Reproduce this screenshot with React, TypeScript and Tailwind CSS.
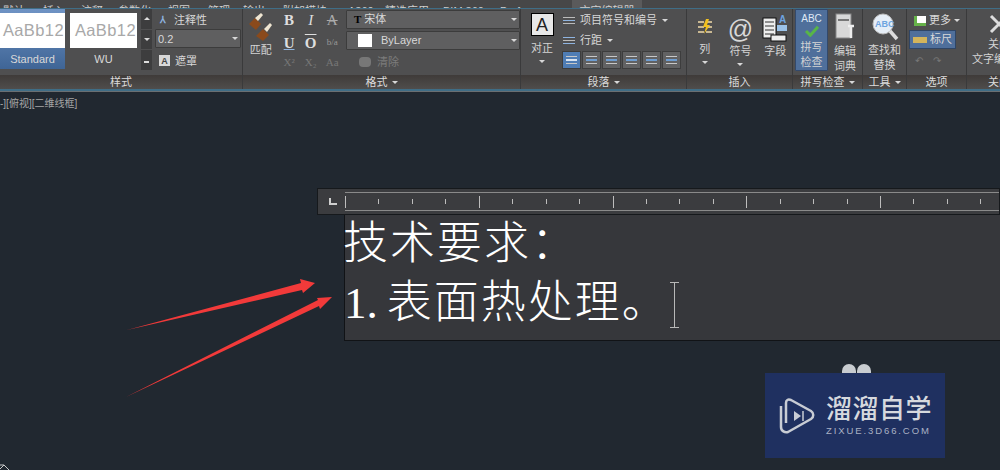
import type { ReactNode } from 'react';

const CJK = "font-['Liberation_Sans','Noto_Sans_CJK_SC',sans-serif]";

const tabs = [
  { label: '默认', w: 'w-[40px]' },
  { label: '插入', w: 'w-[38px]' },
  { label: '注释', w: 'w-[37px]' },
  { label: '参数化', w: 'w-[50px]' },
  { label: '视图', w: 'w-[40px]' },
  { label: '管理', w: 'w-[35px]' },
  { label: '输出', w: 'w-[40px]' },
  { label: '附加模块', w: 'w-[65px]' },
  { label: 'A360', w: 'w-[37px]' },
  { label: '精选应用', w: 'w-[58px]' },
  { label: 'BIM 360', w: 'w-[57px]' },
  { label: 'Performance', w: 'w-[73px]' },
];

function Caret() {
  return <span className="inline-block h-0 w-0 border-x-[3px] border-t-[3px] border-x-transparent border-t-[#d8d8d8]" />;
}

function Panel({ title, width, children, corner }: { title: string; width: string; children: ReactNode; corner?: boolean }) {
  return (
    <div className={`${width} flex shrink-0 flex-col border-r border-[#3a3a3b]`}>
      <div className="flex h-[66px] overflow-hidden">{children}</div>
      <div className="flex h-[14px] items-center justify-center gap-1 bg-gradient-to-b from-[#3f3b39] to-[#4f4d4c] pt-[1px] text-[11px] leading-none text-[#dcdcdc]">
        {title}
        {corner && <Caret />}
      </div>
    </div>
  );
}

function StyleSwatch({ name, active, w }: { name: string; active?: boolean; w: string }) {
  return (
    <div className={`flex h-[60px] ${w} shrink-0 flex-col items-center ${active ? 'bg-gradient-to-b from-[#6f93c4] to-[#3f6596]' : ''}`}>
      <div className="mt-[4px] flex h-[35px] w-full items-center justify-end overflow-hidden bg-white pr-[1px] font-['Liberation_Sans'] text-[16.5px] font-light tracking-[0.4px] whitespace-nowrap text-[#a8a8a8]">
        AaBb12
      </div>
      <div className="mt-[4px] text-[11px] leading-[14px] text-[#d8d8d8]">{name}</div>
    </div>
  );
}

function Field({ children, w }: { children: ReactNode; w: string }) {
  return (
    <div className={`${w} flex h-[19px] items-center justify-between rounded-[1px] border border-[#3c3c3c] bg-[#5f5f60] pr-[2px] pl-[2px] text-[11px] text-[#d8d8d8]`}>
      <div className="flex items-center">{children}</div>
      <Caret />
    </div>
  );
}

function BigLabel({ lines, caret }: { lines: string[]; caret?: boolean }) {
  return (
    <div className="flex flex-col items-center text-[11px] leading-[15px] text-[#d4d4d4]">
      {lines.map((l) => (
        <span key={l} className="whitespace-nowrap">{l}</span>
      ))}
      {caret && <span className="mt-[4px] flex"><Caret /></span>}
    </div>
  );
}

function Para({ active }: { active?: boolean }) {
  return (
    <div className={`flex h-[18px] w-[19px] shrink-0 flex-col justify-center gap-[2px] border border-[#3d3d3d] px-[3px] ${active ? 'bg-[#4f7db5]' : 'bg-[#626263]'}`}>
      <span className="h-px w-full bg-[#c8c8c8]" />
      <span className={`h-[2px] w-full ${active ? 'bg-[#d8e4f2]' : 'bg-[#6d9cd0]'}`} />
      <span className="h-px w-full bg-[#c8c8c8]" />
    </div>
  );
}

export default function App() {
  return (
    <div className={`relative flex h-[470px] w-[1000px] flex-col overflow-hidden bg-[#212830] ${CJK}`}>
      {/* tab strip, only the lower edge of the labels is on screen */}
      <div className="flex h-[9px] shrink-0 items-end overflow-hidden border-b border-[#3f6d86] bg-[#474748] text-[11px] leading-[14px] text-[#cfcfcf]">
        {tabs.map((t) => (
          <span key={t.label} className={`${t.w} -mb-[10px] shrink-0 pl-[3px] whitespace-nowrap`}>{t.label}</span>
        ))}
        <span className="ml-[2px] flex h-full w-[70px] items-end justify-center bg-[#5a5a5b]">
          <span className="-mb-[10px] whitespace-nowrap">文字编辑器</span>
        </span>
      </div>

      {/* ribbon */}
      <div className="flex h-[80px] shrink-0 bg-[#4f4f50]">
        <Panel title="样式" width="w-[243px]">
          <div className="flex h-[62px] items-start">
            <StyleSwatch name="Standard" active w="w-[65px]" />
            <div className="ml-[5px]"><StyleSwatch name="WU" w="w-[67px]" /></div>
            <div className="ml-[4px] flex h-[61px] w-[11px] shrink-0 flex-col gap-px">
              <div className="flex flex-1 items-center justify-center bg-[#3d3d3e]"><span className="h-0 w-0 border-x-[3px] border-b-[3px] border-x-transparent border-b-[#ddd]" /></div>
              <div className="flex flex-1 items-center justify-center bg-[#3d3d3e]"><Caret /></div>
              <div className="flex flex-1 items-center justify-center bg-[#3d3d3e]"><span className="h-[5px] w-[5px] border-b-2 border-[#ddd]" /></div>
            </div>
          </div>
          <div className="ml-[3px] flex flex-col pt-[1px] text-[11px] leading-[14px] text-[#d8d8d8]">
            <div className="flex h-[19px] items-center gap-[8px] pl-[5px]">
              <span className="text-[10px] font-bold text-[#8fb4e0]">⅄</span>注释性
            </div>
            <Field w="w-[86px]"><span>0.2</span></Field>
            <div className="mt-[3px] flex h-[19px] items-center gap-[5px] pl-[4px]">
              <span className="flex h-[11px] w-[11px] items-center justify-center bg-[#d8d8d8] text-[9px] font-bold text-[#444]">A</span>遮罩
            </div>
          </div>
        </Panel>

        <Panel title="格式" width="w-[278px]" corner>
          <div className="flex w-[36px] flex-col items-center pt-[3px]">
            <svg width="28" height="32" viewBox="0 0 28 32">
              <path d="M2 12 8 6l6 6-5 6z" fill="#8a4a1c" />
              <path d="M8 6l6-5 2 2-5 6z" fill="#efe6d2" />
              <path d="M9 24l7-7 6 6-6 6z" fill="#8a4a1c" />
              <path d="M17 17l6-6 2 2-5 7z" fill="#efe6d2" />
            </svg>
            <div className="mt-[-1px]"><BigLabel lines={['匹配']} /></div>
          </div>
          <div className="grid h-[60px] w-[66px] grid-cols-3 place-items-center font-['Liberation_Serif'] text-[15px] font-bold text-[#dedede]">
            <span>B</span>
            <span className="font-normal italic">I</span>
            <span className="font-normal text-[#aaa] line-through">A</span>
            <span className="underline decoration-[#8fb4e0]">U</span>
            <span className="overline">O</span>
            <span className="text-[9px] font-normal text-[#999]">b/a</span>
            <span className="text-[11px] font-normal text-[#777]">X²</span>
            <span className="text-[11px] font-normal text-[#777]">X₂</span>
            <span className="text-[11px] font-normal text-[#777]">Aa</span>
          </div>
          <div className="ml-[3px] flex flex-col gap-[2px] pt-[1px]">
            <Field w="w-[174px]">
              <span className="mr-[3px] ml-[5px] font-['Liberation_Serif'] font-bold text-black">T</span>宋体
            </Field>
            <Field w="w-[174px]">
              <span className="mr-[9px] ml-[9px] h-[13px] w-[14px] bg-white" />ByLayer
            </Field>
            <div className="flex h-[20px] items-center gap-[6px] pl-[13px] text-[11px] text-[#7c7c7c]">
              <span className="h-[10px] w-[12px] rounded-sm bg-[#777]" />清除
            </div>
          </div>
        </Panel>

        <Panel title="段落" width="w-[166px]" corner>
          <div className="flex w-[42px] shrink-0 flex-col items-center pt-[4px]">
            <div className="flex h-[23px] w-[23px] items-center justify-center border border-black bg-[#e8e8e8] font-['Liberation_Sans'] text-[18px] leading-none text-[#222]">A</div>
            <div className="mt-[5px]"><BigLabel lines={['对正']} caret /></div>
          </div>
          <div className="flex flex-col pt-[1px] text-[11px] text-[#d8d8d8]">
            <div className="flex h-[20px] items-center gap-[5px] whitespace-nowrap">
              <span className="flex w-[12px] flex-col gap-[2px]"><i className="h-px bg-[#bbb]" /><i className="h-px bg-[#8fb4e0]" /><i className="h-px bg-[#bbb]" /></span>
              项目符号和编号 <Caret />
            </div>
            <div className="flex h-[21px] items-center gap-[5px]">
              <span className="flex w-[12px] flex-col gap-[2px]"><i className="h-px bg-[#8fb4e0]" /><i className="h-px bg-[#bbb]" /><i className="h-px bg-[#8fb4e0]" /></span>
              行距 <Caret />
            </div>
            <div className="-ml-[1px] flex gap-px">
              <Para active /><Para /><Para /><Para /><Para /><Para />
            </div>
          </div>
        </Panel>

        <Panel title="插入" width="w-[106px]">
          <div className="flex w-[36px] flex-col items-center pt-[9px]">
            <svg width="16" height="26" viewBox="0 0 16 26">
              <path d="M1 4h6M1 9h6M1 14h6M9 4h6M9 9h6M9 14h6" stroke="#c9b892" strokeWidth="2" />
              <path d="M9 1 6 9h3l-2 7 6-9h-3l2-6z" fill="#f0c020" />
            </svg>
            <div className="mt-[-2px]"><BigLabel lines={['列']} caret /></div>
          </div>
          <div className="flex w-[36px] flex-col items-center pt-[5px]">
            <span className="h-[31px] font-['Liberation_Sans'] text-[25px] leading-[31px] text-[#d8d8d8]">@</span>
            <div className="mt-[-1px]"><BigLabel lines={['符号']} caret /></div>
          </div>
          <div className="flex w-[34px] flex-col items-center pt-[4px]">
            <svg width="26" height="32" viewBox="0 0 26 32">
              <rect x="1" y="5" width="13" height="20" fill="#eee" stroke="#111" />
              <path d="M3 9h9M3 13h9M3 17h9M3 21h9" stroke="#333" />
              <rect x="15" y="12" width="10" height="6" fill="#9cc3e8" />
              <rect x="9" y="22" width="15" height="6" fill="#eee" stroke="#111" />
              <text x="17" y="10" fontSize="10" fontWeight="700" fill="#6ea4e0">A</text>
            </svg>
            <div className="mt-[-1px]"><BigLabel lines={['字段']} /></div>
          </div>
        </Panel>

        <Panel title="拼写检查" width="w-[70px]" corner>
          <div className="ml-[2px] flex h-[62px] w-[33px] shrink-0 flex-col items-center rounded-[1px] border border-[#33496b] bg-[#4f6f9b] pt-[3px]">
            <span className="font-['Liberation_Sans'] text-[10px] leading-[12px] text-[#dfe8f5]">ABC</span>
            <svg width="18" height="14" viewBox="0 0 18 14"><path d="M2 7l5 5 9-10" fill="none" stroke="#58b548" strokeWidth="3.5" /></svg>
            <div className="mt-[3px]"><BigLabel lines={['拼写', '检查']} /></div>
          </div>
          <div className="flex w-[34px] flex-col items-center pt-[3px]">
            <svg width="22" height="32" viewBox="0 0 22 32">
              <rect x="2" y="2" width="15" height="24" fill="#d8d8d8" stroke="#888" />
              <path d="M4 8h11" stroke="#777" strokeWidth="2" />
              <path d="M17 14v12M14 14h6" stroke="#eee" strokeWidth="2.5" />
            </svg>
            <BigLabel lines={['编辑', '词典']} />
          </div>
        </Panel>

        <Panel title="工具" width="w-[44px]" corner>
          <div className="flex w-full flex-col items-center pt-[3px]">
            <svg width="28" height="32" viewBox="0 0 28 32">
              <circle cx="12" cy="12" r="10" fill="#e6eef7" stroke="#bbb" />
              <text x="4" y="15" fontSize="9" fontWeight="700" fill="#6ea4e0">ABC</text>
              <path d="M19 19l7 8" stroke="#ddd" strokeWidth="3.5" />
            </svg>
            <div className="mt-[-1px]"><BigLabel lines={['查找和', '替换']} /></div>
          </div>
        </Panel>

        <Panel title="选项" width="w-[60px]">
          <div className="flex w-full flex-col items-start pt-[2px] pl-[2px] text-[11px] text-[#d8d8d8]">
            <div className="flex h-[19px] items-center gap-[3px] pl-[5px]">
              <span className="h-[10px] w-[12px] border-b-[3px] border-l-[3px] border-[#66b24a] bg-white" />更多<Caret />
            </div>
            <div className="flex h-[19px] w-[47px] items-center justify-center gap-[3px] border border-[#2f4565] bg-[#4f6f9b]">
              <span className="h-[6px] w-[14px] bg-[#d2b45c]" />标尺
            </div>
            <div className="mt-[4px] pl-[6px] text-[10px] text-[#777]">↶　↷</div>
          </div>
        </Panel>

        <div className="flex flex-col">
          <div className="flex h-[66px] flex-col items-start overflow-hidden pt-[2px] pl-[5px]">
            <svg className="ml-[16px]" width="22" height="26" viewBox="0 0 22 26"><path d="M3 5l16 16M19 5 3 21" stroke="#ddd" strokeWidth="3" /></svg>
            <div className="ml-[16px] text-[11px] leading-[15px] whitespace-nowrap text-[#d4d4d4]">关闭</div>
            <div className="text-[11px] leading-[15px] whitespace-nowrap text-[#d4d4d4]">文字编辑器</div>
          </div>
          <div className="flex h-[14px] w-[33px] items-center overflow-hidden bg-gradient-to-b from-[#3f3b39] to-[#4f4d4c] pt-[1px] pl-[21px] text-[11px] leading-none whitespace-nowrap text-[#dcdcdc]">关闭</div>
        </div>
      </div>

      <div className="h-[3px] shrink-0 border-t-2 border-[#3f6d86] bg-[#6a6f72]" />

      {/* drawing area */}
      <div className="relative flex-1">
        <div className="pt-[6px] pl-0 text-[10px] leading-[12px] text-[#a6a6a6]">-][俯视][二维线框]</div>

        {/* floating text editor */}
        <div className="absolute top-[96px] left-[317px] flex h-[27px] w-[683px] items-center border border-[#16191c] bg-[#3b3c3f]">
          <span className="ml-[11px] h-[7px] w-[8px] shrink-0 border-b-2 border-l-2 border-[#cfcfcf]" />
          <div className="relative ml-[8px] flex h-[19px] flex-1 items-center overflow-hidden border-y border-[#8a8a8a]">
            {Array.from({ length: 20 }, (_, i) => (
              <div key={i} className="flex w-[33.45px] shrink-0 items-center">
                <span className={`w-px bg-[#bdbdbd] ${i % 4 === 0 ? 'h-[12px]' : 'h-[5px]'}`} />
              </div>
            ))}
          </div>
        </div>
        <div className="absolute top-[123px] left-[344px] h-[126px] w-[656px] border-b border-l border-[#111316] bg-[#36373b] text-[45px] leading-[59px] text-white">
          <div className="-ml-[2px] font-['Liberation_Serif','Noto_Sans_CJK_SC',serif] font-light tracking-[2px] whitespace-nowrap">技术要求：</div>
          <div className="flex items-center font-['Liberation_Serif','Noto_Sans_CJK_SC',serif] font-light whitespace-nowrap">
            <span className="-ml-[1px]">1.</span>
            <span className="ml-[9px] tracking-[2px]">表面热处理。</span>
            <div className="mt-[2px] ml-[1px] flex h-[46px] w-[9px] flex-col items-center justify-between border-y border-[#b8b8b8]">
              <span className="h-full w-px bg-[#b8b8b8]" />
            </div>
          </div>
        </div>

        {/* red arrows */}
        <svg className="absolute top-[178px] left-[120px]" width="220" height="140" viewBox="0 0 220 140">
          <path d="M7 60 L181 13 L180 9 L195 13 L183 23 L182 20 Z" fill="#f23a3a" />
          <path d="M6 127 L198 30 L197 28 L212 27 L200 39 L199 36 Z" fill="#f23a3a" />
        </svg>

        {/* watermark */}
        <div className="absolute top-[272px] left-[842px] flex gap-px">
          <span className="h-[12px] w-[14px] rounded-t-full bg-[#c8ccd0]" />
          <span className="h-[10px] w-[14px] rounded-t-full bg-[#c8ccd0]" />
        </div>
        <div className="absolute top-[281px] left-[765px] flex h-[85px] w-[180px] items-center bg-[#1f3060] pl-[14px]">
          <svg width="36" height="38" viewBox="0 0 36 38" fill="none" stroke="#c8ccd4" strokeWidth="2.5">
            <path d="M2 9v21c0 4 4 6 7 5l23-13c3-2 3-6 0-8L12 3C9 2 7 3 7 6v20" strokeLinejoin="round" />
            <path d="M15 14l7 5-7 5z" fill="#c8ccd4" stroke="none" />
            <path d="M24 14v10" strokeWidth="1.5" />
          </svg>
          <div className="ml-[11px] flex flex-col text-[#d6d9de]">
            <span className="text-[26px] leading-[30px] font-medium tracking-[0.5px] whitespace-nowrap">溜溜自学</span>
            <span className="mt-[1px] font-['Liberation_Sans'] text-[9.5px] leading-[12px] tracking-[1.9px] whitespace-nowrap text-[#aab2c4]">ZIXUE.3D66.COM</span>
          </div>
        </div>

        {/* ucs icon corner */}
        <svg className="absolute bottom-0 left-0" width="16" height="6" viewBox="0 0 16 6">
          <path d="M0 5l4-4M4 1l5 5M4 1 0 1" stroke="#c8c8c8" strokeWidth="1" />
        </svg>
      </div>
    </div>
  );
}
